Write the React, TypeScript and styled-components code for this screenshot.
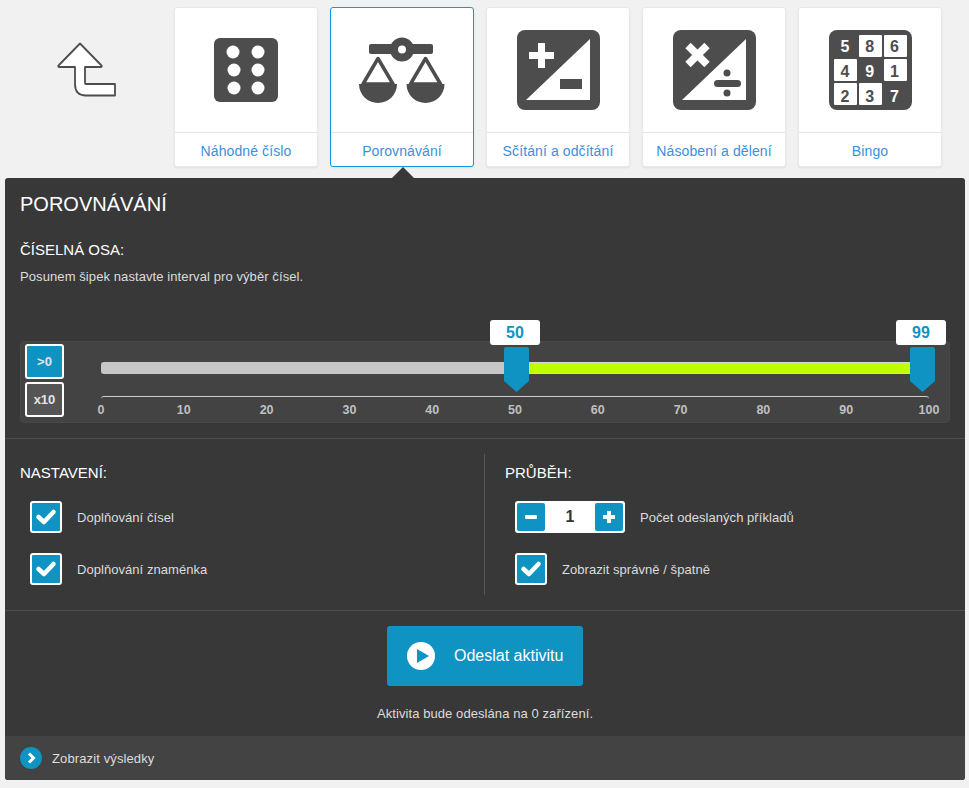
import React from "react";
import styled, { createGlobalStyle } from "styled-components";

const Global = createGlobalStyle`
  html, body { margin: 0; padding: 0; background: #f1f1f1; }
  body { font-family: "Liberation Sans", Arial, sans-serif; }
  * { box-sizing: border-box; }
`;

const Page = styled.div`
  width: 969px;
  height: 788px;
  overflow: hidden;
`;
const TopRow = styled.div`
  display: flex;
  padding-top: 7px;
`;
const BackSlot = styled.div`
  width: 174px;
  height: 160px;
  flex: none;
  display: block;
`;
const Cards = styled.div`
  display: flex;
  gap: 12px;
`;
const Card = styled.div<{ $active?: boolean }>`
  width: 144px;
  height: 160px;
  background: #fff;
  border-radius: 3px;
  border: 1px solid ${(p) => (p.$active ? "#0f9ae0" : "#e9e9e9")};
  box-shadow: 0 1px 2px rgba(0, 0, 0, 0.08);
  display: flex;
  flex-direction: column;
`;
const CardIcon = styled.div`
  height: 125px;
  flex: none;
  border-bottom: 1px solid #e3e3e3;
  display: block;
`;
const CardLabel = styled.div`
  flex: 1;
  display: flex;
  align-items: center;
  justify-content: center;
  font-size: 14px;
  letter-spacing: 0.1px;
  color: #3a90dc;
  padding-top: 3px;
`;
const Glyph = styled.svg`
  display: block;
`;

const Panel = styled.div`
  position: relative;
  margin: 11px 0 0 5px;
  width: 960px;
  height: 602px;
  background: #383838;
  border-radius: 3px;
  color: #fff;
  overflow: visible;
  display: flex;
  flex-direction: column;
`;
const Pointer = styled.div`
  position: absolute;
  left: 387px;
  top: -11px;
  width: 0;
  height: 0;
  border-left: 11px solid transparent;
  border-right: 11px solid transparent;
  border-bottom: 11px solid #383838;
`;
const Head = styled.div`
  padding: 15px 15px 0;
  height: 261px;
  flex: none;
  border-bottom: 1px solid #4d4d4d;
`;
const Title = styled.h1`
  margin: 0;
  font-size: 20px;
  line-height: 23px;
  font-weight: 400;
  color: #fff;
`;
const SectionTitle = styled.h2`
  margin: 0;
  font-size: 15px;
  line-height: 18px;
  font-weight: 400;
  color: #fff;
`;
const AxisTitle = styled(SectionTitle)`
  margin-top: 25px;
`;
const Hint = styled.p`
  margin: 10px 0 0;
  font-size: 13px;
  letter-spacing: 0.09px;
  line-height: 15px;
  color: #ddd;
`;
const SliderBox = styled.div`
  margin-top: 57px;
  width: 930px;
  height: 82px;
  background: #434343;
  border: 1px solid #484848;
  border-radius: 4px;
  display: flex;
  padding: 2px 20px 0 4px;
`;
const ModeColumn = styled.div`
  width: 39px;
  flex: none;
  margin-right: 37px;
  display: flex;
  flex-direction: column;
  gap: 3px;
`;
const ModeButton = styled.div<{ $on?: boolean }>`
  width: 39px;
  height: 35px;
  border: 2px solid #fff;
  border-radius: 3px;
  background: ${(p) => (p.$on ? "#0f93c2" : "#555")};
  color: #e4e4e4;
  font-size: 13px;
  font-weight: 700;
  display: flex;
  align-items: center;
  justify-content: center;
`;
const SliderArea = styled.div`
  position: relative;
  flex: 1;
  padding-top: 18px;
`;
const Track = styled.div`
  display: flex;
  height: 12px;
`;
const TrackGray = styled.div`
  width: 403px;
  background: #c6c6c6;
  border-radius: 3px 0 0 3px;
`;
const TrackGreen = styled.div`
  flex: 1;
  background: #bfff00;
  border-top: 1px solid #d4d4d4;
  border-bottom: 1px solid #d4d4d4;
  margin-right: 19px;
`;
const Ruler = styled.div`
  margin-top: 22px;
  height: 7px;
  border-top: 1px solid #cfcfcf;
  border-radius: 3px 3px 0 0;
`;
const Ticks = styled.div`
  display: flex;
  justify-content: space-between;
`;
const Tick = styled.span`
  width: 0;
  display: flex;
  justify-content: center;
  font-size: 12.5px;
  line-height: 14px;
  font-weight: 700;
  color: #c0c0c0;
`;
const Handle = styled.svg<{ $left: number }>`
  position: absolute;
  top: 3px;
  left: ${(p) => p.$left}px;
`;
const Bubble = styled.div<{ $left: number }>`
  position: absolute;
  top: -24px;
  left: ${(p) => p.$left}px;
  width: 50px;
  height: 25px;
  background: #fff;
  border-radius: 3px;
  color: #0f93c2;
  font-size: 16px;
  font-weight: 700;
  display: flex;
  align-items: center;
  justify-content: center;
`;
const Settings = styled.div`
  height: 172px;
  flex: none;
  display: flex;
  padding: 15px 0;
  border-bottom: 1px solid #4d4d4d;
`;
const Column = styled.div<{ $divided?: boolean }>`
  width: ${(p) => (p.$divided ? "481px" : "479px")};
  flex: none;
  padding-left: ${(p) => (p.$divided ? "20px" : "15px")};
  ${(p) => (p.$divided ? "border-left: 1px solid #555;" : "")}
  padding-top: 10px;
`;
const Rows = styled.div<{ $indent: number }>`
  margin-top: 19px;
  padding-left: ${(p) => p.$indent}px;
  display: flex;
  flex-direction: column;
  gap: 20px;
`;
const Row = styled.div`
  display: flex;
  align-items: center;
  height: 32px;
`;
const Check = styled.div`
  width: 32px;
  height: 32px;
  border: 2px solid #fff;
  border-radius: 3px;
  background: #0f93c2;
  margin-right: 15px;
  flex: none;
  display: flex;
  align-items: center;
  justify-content: center;
`;
const RowLabel = styled.span`
  font-size: 13px;
  letter-spacing: 0.05px;
  color: #ddd;
`;
const Stepper = styled.div`
  width: 110px;
  height: 32px;
  background: #fff;
  border-radius: 3px;
  padding: 2px;
  margin-right: 15px;
  flex: none;
  display: flex;
  align-items: center;
  justify-content: space-between;
`;
const StepButton = styled.div`
  width: 28px;
  height: 28px;
  background: #0f93c2;
  border-radius: 2px;
  display: flex;
  align-items: center;
  justify-content: center;
`;
const StepValue = styled.span`
  font-size: 16px;
  font-weight: 700;
  color: #333;
`;
const Send = styled.div`
  padding-top: 15px;
  height: 125px;
  flex: none;
  display: flex;
  flex-direction: column;
  align-items: center;
`;
const SendButton = styled.div`
  width: 196px;
  height: 60px;
  background: #0f93c2;
  border-radius: 3px;
  display: flex;
  align-items: center;
  padding-left: 20px;
  gap: 19px;
  color: #fff;
  font-size: 16px;
`;
const SendNote = styled.div`
  margin-top: 20px;
  font-size: 13px;
  letter-spacing: 0.08px;
  line-height: 15px;
  color: #ddd;
`;
const Footer = styled.div`
  flex: 1;
  background: #434343;
  border-radius: 0 0 3px 3px;
  display: flex;
  align-items: center;
  padding-left: 15px;
  gap: 10px;
  font-size: 13px;
  letter-spacing: 0.12px;
  color: #ddd;
`;

const D = "#4d4d4d";

const BackArrow = () => (
  <Glyph width={174} height={160} viewBox="0 0 174 160">
    <path
      d="M80 36.500 L59 58 Q57 60 60 60 L75 60 L75 77 Q75 88.500 86 88.500 L115 88.500 L115 77 L86 77 Q85 77 85 76 L85 60 L100 60 Q103 60 101 58 Z"
      fill="#fff"
      stroke={D}
      strokeWidth={1.8}
      strokeLinejoin="round"
    />
  </Glyph>
);
const Dice = () => (
  <Glyph width={142} height={123} viewBox="0 0 142 123">
    <rect x={39} y={30} width={64} height={64} rx={6} fill={D} />
    {[[58, 44], [83, 44], [59, 62], [83, 62], [59, 80], [83, 80]].map(([cx, cy]) => (
      <circle key={`${cx}-${cy}`} cx={cx} cy={cy} r={6.5} fill="#fff" />
    ))}
  </Glyph>
);
const Scales = () => (
  <Glyph width={142} height={123} viewBox="0 0 142 123">
    <rect x={38} y={36} width={64} height={10} rx={2} fill={D} />
    <circle cx={71} cy={41.500} r={12} fill={D} />
    <circle cx={71} cy={41.500} r={4} fill="#fff" />
    {[47, 94.500].map((x) => (
      <g key={x}>
        <path d={`M${x} 50.500 L${x - 15} 76 L${x + 15} 76 Z`} fill="none" stroke={D} strokeWidth={3.5} strokeLinejoin="round" />
        <path d={`M${x - 19} 76 H${x + 19} A19 19 0 0 1 ${x - 19} 76 Z`} fill={D} />
      </g>
    ))}
  </Glyph>
);
const PlusMinus = () => (
  <Glyph width={142} height={123} viewBox="0 0 142 123">
    <rect x={30} y={22} width={83} height={80} rx={8} fill={D} />
    <path d="M39 92 L103 31 V92 Z" fill="#fff" />
    <path d="M42 44 H51 V35 H58 V44 H67 V51 H58 V60 H51 V51 H42 Z" fill="#fff" />
    <rect x={73} y={71} width={22} height={10} fill={D} />
  </Glyph>
);
const TimesDivide = () => (
  <Glyph width={142} height={123} viewBox="0 0 142 123">
    <rect x={30} y={22} width={83} height={80} rx={8} fill={D} />
    <path d="M39 92 L103 31 V92 Z" fill="#fff" />
    <path d="M45 37.500 L64 56.500 M64 37.500 L45 56.500" fill="none" stroke="#fff" strokeWidth={7.500} />
    <rect x={71} y={72} width={27} height={7} rx={3.500} fill={D} />
    <circle cx={84} cy={65} r={3.500} fill={D} />
    <circle cx={84} cy={85} r={3.500} fill={D} />
  </Glyph>
);
const bingo: [string, number, number, boolean][] = [
  ["5", 0, 0, false], ["8", 1, 0, true], ["6", 2, 0, true],
  ["4", 0, 1, true], ["9", 1, 1, false], ["1", 2, 1, true],
  ["2", 0, 2, true], ["3", 1, 2, true], ["7", 2, 2, false],
];
const bingoBase = [43.5, 69, 93.5];
const Bingo = () => (
  <Glyph width={142} height={123} viewBox="0 0 142 123">
    <rect x={30} y={22} width={83} height={80} rx={8} fill={D} />
    {bingo.map(([n, c, r, on]) => (
      <g key={n}>
        {on && <rect x={35 + c * 25} y={27 + r * 24} width={23} height={22} rx={1} fill="#fff" />}
        <text
          x={46 + c * 24.7}
          y={bingoBase[r]}
          textAnchor="middle"
          fontFamily="Liberation Sans"
          fontWeight={700}
          fontSize={16}
          fill={on ? D : "#fff"}
        >
          {n}
        </text>
      </g>
    ))}
  </Glyph>
);

const CheckMark = () => (
  <Glyph width={22} height={18} viewBox="0 0 22 18">
    <path d="M3.500 9 L9 14 L18.500 4" fill="none" stroke="#fff" strokeWidth={4.500} strokeLinecap="round" strokeLinejoin="round" />
  </Glyph>
);
const SliderHandle = ({ left }: { left: number }) => (
  <Handle $left={left} width={25} height={45} viewBox="0 0 25 45">
    <path d="M2 0 H23 Q25 0 25 2 V34 L12.500 45 L0 34 V2 Q0 0 2 0 Z" fill="#0f93c2" />
  </Handle>
);

const ticks = [0, 10, 20, 30, 40, 50, 60, 70, 80, 90, 100];

export default function App() {
  return (
    <Page>
      <Global />
      <TopRow>
        <BackSlot>
          <BackArrow />
        </BackSlot>
        <Cards>
          <Card>
            <CardIcon><Dice /></CardIcon>
            <CardLabel>Náhodné číslo</CardLabel>
          </Card>
          <Card $active>
            <CardIcon><Scales /></CardIcon>
            <CardLabel>Porovnávání</CardLabel>
          </Card>
          <Card>
            <CardIcon><PlusMinus /></CardIcon>
            <CardLabel>Sčítání a odčítání</CardLabel>
          </Card>
          <Card>
            <CardIcon><TimesDivide /></CardIcon>
            <CardLabel>Násobení a dělení</CardLabel>
          </Card>
          <Card>
            <CardIcon><Bingo /></CardIcon>
            <CardLabel>Bingo</CardLabel>
          </Card>
        </Cards>
      </TopRow>
      <Panel>
        <Pointer />
        <Head>
          <Title>POROVNÁVÁNÍ</Title>
          <AxisTitle>ČÍSELNÁ OSA:</AxisTitle>
          <Hint>Posunem šipek nastavte interval pro výběr čísel.</Hint>
          <SliderBox>
            <ModeColumn>
              <ModeButton $on>&gt;0</ModeButton>
              <ModeButton>x10</ModeButton>
            </ModeColumn>
            <SliderArea>
              <Track>
                <TrackGray />
                <TrackGreen />
              </Track>
              <Ruler />
              <Ticks>
                {ticks.map((t) => (
                  <Tick key={t}>{t}</Tick>
                ))}
              </Ticks>
              <SliderHandle left={403} />
              <SliderHandle left={809} />
              <Bubble $left={389}>50</Bubble>
              <Bubble $left={795}>99</Bubble>
            </SliderArea>
          </SliderBox>
        </Head>
        <Settings>
          <Column>
            <SectionTitle>NASTAVENÍ:</SectionTitle>
            <Rows $indent={10}>
              <Row>
                <Check><CheckMark /></Check>
                <RowLabel>Doplňování čísel</RowLabel>
              </Row>
              <Row>
                <Check><CheckMark /></Check>
                <RowLabel>Doplňování znaménka</RowLabel>
              </Row>
            </Rows>
          </Column>
          <Column $divided>
            <SectionTitle>PRŮBĚH:</SectionTitle>
            <Rows $indent={10}>
              <Row>
                <Stepper>
                  <StepButton>
                    <Glyph width={14} height={14} viewBox="0 0 14 14">
                      <rect x={1} y={5} width={12} height={4} rx={1} fill="#fff" />
                    </Glyph>
                  </StepButton>
                  <StepValue>1</StepValue>
                  <StepButton>
                    <Glyph width={14} height={14} viewBox="0 0 14 14">
                      <path d="M5 1 H9 V5 H13 V9 H9 V13 H5 V9 H1 V5 H5 Z" fill="#fff" />
                    </Glyph>
                  </StepButton>
                </Stepper>
                <RowLabel>Počet odeslaných příkladů</RowLabel>
              </Row>
              <Row>
                <Check><CheckMark /></Check>
                <RowLabel>Zobrazit správně / špatně</RowLabel>
              </Row>
            </Rows>
          </Column>
        </Settings>
        <Send>
          <SendButton>
            <Glyph width={28} height={28} viewBox="0 0 28 28">
              <circle cx={14} cy={14} r={14} fill="#fff" />
              <path d="M10 7 L22 14 L10 21 Z" fill="#0f93c2" />
            </Glyph>
            Odeslat aktivitu
          </SendButton>
          <SendNote>Aktivita bude odeslána na 0 zařízení.</SendNote>
        </Send>
        <Footer>
          <Glyph width={22} height={22} viewBox="0 0 22 22">
            <circle cx={11} cy={11} r={11} fill="#0f93c2" />
            <path d="M9 6.500 L13.500 11 L9 15.500" fill="none" stroke="#fff" strokeWidth={3} />
          </Glyph>
          Zobrazit výsledky
        </Footer>
      </Panel>
    </Page>
  );
}
